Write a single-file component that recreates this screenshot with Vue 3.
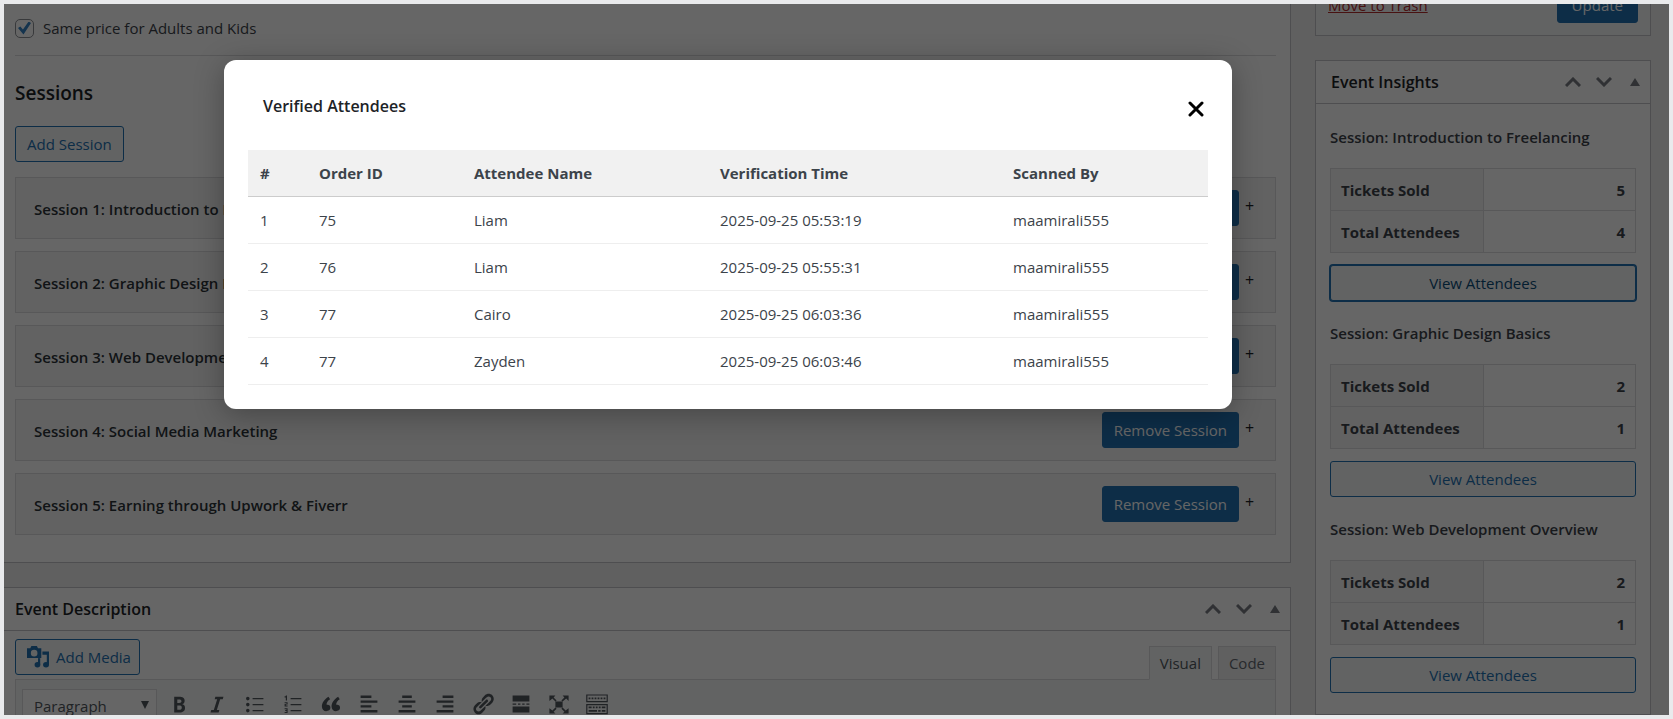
<script setup>
import { ref } from 'vue'

const samePrice = ref(true)
const format = ref('Paragraph')

const sessions = [
  'Session 1: Introduction to Freelancing',
  'Session 2: Graphic Design Basics',
  'Session 3: Web Development Overview',
  'Session 4: Social Media Marketing',
  'Session 5: Earning through Upwork & Fiverr',
]

const insights = [
  { name: 'Introduction to Freelancing', sold: 5, attendees: 4, focused: true },
  { name: 'Graphic Design Basics', sold: 2, attendees: 1 },
  { name: 'Web Development Overview', sold: 2, attendees: 1 },
]

const attendees = [
  { order: 75, name: 'Liam', time: '2025-09-25 05:53:19', by: 'maamirali555' },
  { order: 76, name: 'Liam', time: '2025-09-25 05:55:31', by: 'maamirali555' },
  { order: 77, name: 'Cairo', time: '2025-09-25 06:03:36', by: 'maamirali555' },
  { order: 77, name: 'Zayden', time: '2025-09-25 06:03:46', by: 'maamirali555' },
]

const tools = [
  { label: 'Bold', d: 'M6 4v13h4.54c1.37 0 2.46-.33 3.26-1 .8-.66 1.2-1.58 1.2-2.77 0-.84-.17-1.51-.51-2.01s-.9-.85-1.67-1.03v-.09c.57-.1 1.02-.4 1.36-.9s.51-1.13.51-1.91c0-1.14-.39-1.98-1.17-2.5C12.75 4.26 11.5 4 9.78 4H6zm2.57 5.15V6.26h1.36c.73 0 1.27.11 1.61.32.34.22.51.58.51 1.07 0 .54-.16.92-.47 1.15s-.82.35-1.51.35h-1.5zm0 2.19h1.6c1.44 0 2.16.53 2.16 1.61 0 .6-.17 1.05-.51 1.34s-.86.43-1.57.43H8.57v-3.38z' },
  { label: 'Italic', d: 'M14.78 6h-2.13l-2.8 9h2.12l-.62 2H4.6l.62-2h2.14l2.8-9H8.03l.62-2h6.75z' },
  { label: 'Bulleted list', d: 'M5.5 5.5a1.5 1.5 0 1 1-3 0 1.5 1.5 0 0 1 3 0zM8 5h9v1H8zM5.5 10.5a1.5 1.5 0 1 1-3 0 1.5 1.5 0 0 1 3 0zM8 10h9v1H8zM5.5 15.5a1.5 1.5 0 1 1-3 0 1.5 1.5 0 0 1 3 0zM8 15h9v1H8z' },
  { label: 'Numbered list', d: 'M8 5h9v1H8zM8 10h9v1H8zM8 15h9v1H8zM4 3h1v4H4zM3 3.5h1v1H3zM3 8.500h2.500v2H4v.7h1.500v.8H3v-2h1.600v-.7H3zM3 13.500h2.500v4H3v-.8h1.600v-.8H3.500v-.8h1.100v-.8H3z' },
  { label: 'Blockquote', d: 'M9.49 13.22c0-.74-.2-1.38-.61-1.9-.62-.78-1.83-.88-2.53-.72-.29-1.65 1.11-3.75 2.92-4.65L7.88 4C4.3 6.16 2.18 9.49 2.45 12.5c.18 2.05 1.6 3.5 3.5 3.5 2 0 3.54-1 3.54-2.78zm8.05 0c0-.74-.2-1.38-.61-1.9-.62-.78-1.83-.88-2.53-.72-.29-1.65 1.11-3.75 2.92-4.65L15.93 4c-3.58 2.16-5.7 5.49-5.43 8.5.18 2.05 1.6 3.5 3.5 3.5 2 0 3.54-1 3.54-2.78z' },
  { label: 'Align left', d: 'M3 3h9v2H3zM3 7h14v2H3zM3 11h9v2H3zM3 15h14v2H3z' },
  { label: 'Align center', d: 'M6 3h8v2H6zM3 7h14v2H3zM6 11h8v2H6zM3 15h14v2H3z' },
  { label: 'Align right', d: 'M8 3h9v2H8zM3 7h14v2H3zM8 11h9v2H8zM3 15h14v2H3z' },
  { label: 'Insert link', d: 'M17.74 2.76c1.68 1.69 1.68 4.41 0 6.1l-1.53 1.52c-1.12 1.12-2.7 1.47-4.14 1.09l2.62-2.61.76-.77.76-.76c.84-.84.84-2.2 0-3.04-.84-.85-2.2-.85-3.04 0l-.77.76-3.38 3.38c-.37-1.44-.02-3.02 1.1-4.14l1.52-1.53c1.69-1.68 4.42-1.68 6.1 0zM8.59 13.43l5.34-5.34c.42-.42.42-1.1 0-1.52-.44-.43-1.13-.39-1.53 0l-5.33 5.34c-.42.42-.42 1.1 0 1.52.44.43 1.13.39 1.52 0zm-.76 2.29l4.14-4.15c.38 1.44.03 3.02-1.09 4.14l-1.52 1.53c-1.69 1.68-4.41 1.68-6.1 0-1.68-1.68-1.68-4.42 0-6.1l1.53-1.52c1.12-1.12 2.7-1.47 4.14-1.1l-4.14 4.15c-.85.84-.85 2.2 0 3.05.84.84 2.2.84 3.04 0z' },
  { label: 'Read more', d: 'M3 3h14v5H3zM3 9.500h3v1.200H3zM7.500 9.500h2v1.200h-2zM11 9.500h2v1.200h-2zM14.500 9.500H17v1.200h-2.500zM3 12h14v5H3z' },
  { label: 'Distraction free', d: 'M7 8h6v5H7zM2 3h5L5.500 4.500 8 7l-1 1-2.500-2.500L2 7.500zM18 3v4.500l-2-2L13 8l-1-1 2.500-2.500L13 3zM2 18v-4.500l2.500 2L7 13l1 1-2.500 2.500L7 18zM18 18h-5l1.500-1.500L12 14l1-1 2.500 2.500 2.500-2z' },
  { label: 'Toolbar toggle', d: 'M1 2h18v6.500H1zM2 3v4.500h16V3zM1 10h18v8.500H1zM2 11v6.500h16V11zM3 4.500h1.500V6H3zM5.500 4.500H7V6H5.500zM8 4.500h1.500V6H8zM10.500 4.500H12V6h-1.500zM13 4.500h1.500V6H13zM15.500 4.500H17V6h-1.500zM3 12h2.500v1.500H3zM6.500 12H8v1.500H6.500zM9 12h1.500v1.500H9zM11.500 12H13v1.500h-1.500zM14 12h3v1.500h-3zM3 15h7v1.500H3zM11 15h2v1.500h-2zM14 15h3v1.500h-3z' },
]
</script>

<template>
  <div class="frame">
    <div class="screen">
      <div class="page">
        <main class="main">
          <section class="box event-box">
            <label class="check">
              <input v-model="samePrice" type="checkbox" />
              <span>Same price for Adults and Kids</span>
            </label>
            <hr />
            <h3>Sessions</h3>
            <button type="button" class="btn add-session">Add Session</button>
            <div class="sessions">
              <article v-for="s in sessions" :key="s" class="session">
                <strong>{{ s }}</strong>
                <button type="button" class="btn primary">Remove Session</button>
                <span class="plus">+</span>
              </article>
            </div>
          </section>

          <section class="box editor-box">
            <header class="box-head">
              <h2>Event Description</h2>
              <div class="handles">
                <button type="button" aria-label="Move up"><svg width="16" height="10" viewBox="0 0 16 10"><path d="M1 9l7-7 7 7" class="chev" /></svg></button>
                <button type="button" aria-label="Move down"><svg width="16" height="10" viewBox="0 0 16 10"><path d="M1 1l7 7 7-7" class="chev" /></svg></button>
                <button type="button" aria-label="Toggle panel"><svg width="10" height="8" viewBox="0 0 10 8"><path d="M5 0l5 8H0z" /></svg></button>
              </div>
            </header>
            <div class="editor">
              <div class="editor-top">
                <button type="button" class="btn media">
                  <svg width="22" height="22" viewBox="0 0 20 20">
                    <path fill-rule="evenodd" d="M1 2h2l1-2h5l1 2h3v9H0V2zM6.500 3.500a3 3 0 1 0 0 6 3 3 0 0 0 0-6z" />
                    <path d="M14 5h6v12h-2V8h-4z" />
                    <path d="M10 11h2v6h-2z" />
                    <ellipse cx="9.500" cy="17" rx="2.600" ry="2.500" />
                    <ellipse cx="17.300" cy="17" rx="2.700" ry="2.500" />
                  </svg>
                  Add Media
                </button>
                <div class="tabs">
                  <button type="button" class="tab active">Visual</button>
                  <button type="button" class="tab">Code</button>
                </div>
              </div>
              <div class="toolbar">
                <div class="select-wrap">
                  <select v-model="format" aria-label="Text format">
                    <option>Paragraph</option>
                    <option>Heading 1</option>
                    <option>Heading 2</option>
                  </select>
                  <svg width="8" height="8" viewBox="0 0 8 8"><path d="M0 0h8L4 8z" /></svg>
                </div>
                <button v-for="t in tools" :key="t.label" type="button" class="tool" :aria-label="t.label">
                  <svg width="24" height="24" viewBox="0 0 20 20"><path :d="t.d" fill-rule="evenodd" /></svg>
                </button>
              </div>
            </div>
          </section>
        </main>

        <aside class="side">
          <section class="box publish">
            <a href="#" class="trash">Move to Trash</a>
            <button type="button" class="btn primary">Update</button>
          </section>
          <section class="box insights">
            <header class="box-head">
              <h2>Event Insights</h2>
              <div class="handles">
                <button type="button" aria-label="Move up"><svg width="16" height="10" viewBox="0 0 16 10"><path d="M1 9l7-7 7 7" class="chev" /></svg></button>
                <button type="button" aria-label="Move down"><svg width="16" height="10" viewBox="0 0 16 10"><path d="M1 1l7 7 7-7" class="chev" /></svg></button>
                <button type="button" aria-label="Toggle panel"><svg width="10" height="8" viewBox="0 0 10 8"><path d="M5 0l5 8H0z" /></svg></button>
              </div>
            </header>
            <div class="insight-list">
              <div v-for="i in insights" :key="i.name" class="insight">
                <h4>Session: {{ i.name }}</h4>
                <table>
                  <tbody>
                    <tr><th scope="row">Tickets Sold</th><td>{{ i.sold }}</td></tr>
                    <tr><th scope="row">Total Attendees</th><td>{{ i.attendees }}</td></tr>
                  </tbody>
                </table>
                <button type="button" class="btn view" :class="{ focused: i.focused }">View Attendees</button>
              </div>
            </div>
          </section>
        </aside>
      </div>

      <div class="overlay">
        <div class="modal" role="dialog" aria-modal="true" aria-labelledby="modal-title">
          <header class="modal-head">
            <h2 id="modal-title">Verified Attendees</h2>
            <button type="button" class="close" aria-label="Close">
              <svg width="16" height="16" viewBox="0 0 16 16"><path d="M2 2l12 12M14 2L2 14" /></svg>
            </button>
          </header>
          <table class="attendees">
            <colgroup>
              <col class="c-num" /><col class="c-order" /><col class="c-name" /><col class="c-time" /><col />
            </colgroup>
            <thead>
              <tr><th>#</th><th>Order ID</th><th>Attendee Name</th><th>Verification Time</th><th>Scanned By</th></tr>
            </thead>
            <tbody>
              <tr v-for="(a, n) in attendees" :key="n">
                <td>{{ n + 1 }}</td><td>{{ a.order }}</td><td>{{ a.name }}</td><td>{{ a.time }}</td><td>{{ a.by }}</td>
              </tr>
            </tbody>
          </table>
        </div>
      </div>
    </div>
  </div>
</template>

<style>
body {
  background: #e9eaec;
}
</style>

<style scoped>
* {
  box-sizing: border-box;
}
.frame {
  height: 100vh;
  padding: 4px;
  background: #e9eaec;
  font: 15px/20px "Open Sans", "Noto Sans", sans-serif;
  color: #3c434a;
}
.screen {
  position: relative;
  height: 100%;
  overflow: hidden;
  background: #f0f0f1;
}
.page {
  display: grid;
  grid-template-columns: minmax(0, 1fr) 336px;
  gap: 24px;
  padding-right: 18px;
}
h2, h3, h4 {
  margin: 0;
  font-weight: 600;
  color: #1d2327;
}
button, select {
  font: inherit;
  color: inherit;
}
svg {
  display: block;
  fill: currentColor;
}
.box {
  background: #fff;
  border: 1px solid #c3c4c7;
}
.main .box {
  border-left: 0;
}
.event-box {
  border-top: 0;
  padding: 14px 14px 27px 11px;
}
.check {
  display: flex;
  align-items: center;
  gap: 9px;
  height: 20px;
}
.check input {
  appearance: none;
  width: 19px;
  height: 19px;
  margin: 0;
  border: 1px solid #8c8f94;
  border-radius: 5px;
  display: grid;
  place-items: center;
}
.check input:checked::before {
  content: "";
  width: 13px;
  height: 13px;
  background: #3582c4;
  clip-path: polygon(0 50%, 18% 38%, 38% 62%, 82% 0, 100% 12%, 42% 100%);
}
hr {
  margin: 17px 0 25px;
  border: 0;
  border-top: 1px solid #dcdcde;
}
h3 {
  font-size: 19px;
  line-height: 24px;
}
.btn {
  height: 36px;
  padding: 0 11px;
  border: 1px solid #2271b1;
  border-radius: 3px;
  background: #f6f7f7;
  color: #2271b1;
  line-height: 20px;
  white-space: nowrap;
}
.btn.primary {
  background: #2271b1;
  color: #fff;
}
.add-session {
  margin: 21px 0 15px;
  display: block;
}
.sessions {
  display: grid;
  gap: 12px;
}
.session {
  display: flex;
  align-items: flex-start;
  padding: 12px 21px 12px 18px;
  height: 62px;
  border: 1px solid #dcdcde;
  background: #f6f6f6;
}
.session strong {
  flex: 1;
  font-weight: 600;
  line-height: 38px;
  color: #2c3338;
}
.plus {
  width: 15px;
  padding-left: 6px;
  font-size: 16px;
  line-height: 32px;
  color: #1d2327;
}
.editor-box {
  margin-top: 24px;
}
.box-head {
  display: flex;
  justify-content: space-between;
  align-items: center;
  height: 43px;
  border-bottom: 1px solid #c3c4c7;
  padding-left: 15px;
}
.main .box-head {
  padding-left: 11px;
}
.box-head h2, .modal-head h2 {
  font-size: 16px;
  line-height: 24px;
}
.handles {
  display: flex;
  color: #787c82;
}
.handles button {
  display: grid;
  place-items: center;
  width: 31px;
  height: 36px;
  padding: 0;
  border: 0;
  background: none;
}
.chev {
  fill: none;
  stroke: currentColor;
  stroke-width: 3;
}
.editor {
  padding: 8px 14px 0 11px;
}
.editor-top {
  display: flex;
  justify-content: space-between;
  align-items: flex-start;
  height: 40px;
}
.media {
  display: flex;
  align-items: center;
  gap: 7px;
  padding: 0 8px 0 11px;
}
.tabs {
  display: flex;
  gap: 6px;
  align-self: flex-end;
  position: relative;
  z-index: 1;
  margin-bottom: -1px;
}
.tab {
  height: 34px;
  padding: 0 10px;
  border: 1px solid #dcdcde;
  background: #f0f0f1;
  color: #646970;
}
.tab.active {
  background: #f6f7f7;
  border-bottom-color: #f6f7f7;
  color: #50575e;
}
.toolbar {
  display: flex;
  gap: 2px;
  padding: 9px 6px;
  height: 80px;
  border: 1px solid #dcdcde;
  background: #f6f7f7;
  color: #50575e;
}
.select-wrap {
  position: relative;
  width: 135px;
  height: 34px;
  margin-right: 2px;
}
.select-wrap select {
  appearance: none;
  width: 100%;
  height: 100%;
  padding: 0 11px;
  border: 1px solid #dcdcde;
  border-radius: 0;
  background: #fff;
}
.select-wrap svg {
  position: absolute;
  right: 8px;
  top: 12px;
  pointer-events: none;
}
.tool {
  display: grid;
  place-items: center;
  width: 36px;
  height: 30px;
  padding: 0;
  border: 0;
  background: none;
}
.side .publish {
  display: flex;
  align-items: center;
  justify-content: space-between;
  margin-top: -30px;
  padding: 12px;
  background: #f6f7f7;
}
.publish .btn {
  padding: 0 14px;
}
.trash {
  color: #b32d2e;
}
.insights {
  margin-top: 24px;
}
.insight-list {
  padding: 22px 14px 0;
}
.insight {
  margin-bottom: 21px;
}
.insight h4 {
  font-size: 15px;
  line-height: 22px;
  margin-bottom: 20px;
  color: #3c434a;
}
.insight table {
  width: 100%;
  height: 85px;
  border-collapse: collapse;
  table-layout: fixed;
}
.insight th, .insight td {
  height: 42px;
  padding: 0 10px;
  border: 1px solid #dcdcde;
  font-weight: 700;
  text-align: left;
  color: #3c434a;
}
.insight th {
  background: #f6f6f6;
}
.insight td {
  text-align: right;
}
.view {
  display: block;
  width: 100%;
  margin-top: 12px;
}
.view.focused {
  color: #0a4b78;
  box-shadow: 0 0 0 1px #2271b1;
}
.overlay {
  position: absolute;
  inset: 0;
  z-index: 2;
  display: flex;
  align-items: flex-start;
  padding: 56px 437px 0 220px;
  background: rgba(0, 0, 0, 0.6);
}
.modal {
  flex: 1;
  padding: 24px;
  border-radius: 12px;
  background: #fff;
  box-shadow: 0 5px 30px rgba(0, 0, 0, 0.3);
}
.modal-head {
  display: flex;
  align-items: center;
  justify-content: space-between;
  height: 44px;
  margin-bottom: 22px;
  padding-left: 15px;
}
.close {
  display: grid;
  place-items: center;
  width: 24px;
  height: 24px;
  margin-top: 6px;
  padding: 0;
  border: 0;
  background: none;
}
.close path {
  stroke: #000;
  stroke-width: 3;
  stroke-linecap: round;
}
.attendees {
  width: 100%;
  border-collapse: separate;
  border-spacing: 0;
  table-layout: fixed;
}
.attendees th, .attendees td {
  height: 47px;
  padding: 0 12px;
  text-align: left;
  border-bottom: 1px solid #eee;
}
.attendees th {
  font-weight: 700;
  background: #f1f1f1;
  border-bottom-color: #ccc;
}
.c-num { width: 59px; }
.c-order { width: 155px; }
.c-name { width: 246px; }
.c-time { width: 293px; }
</style>
